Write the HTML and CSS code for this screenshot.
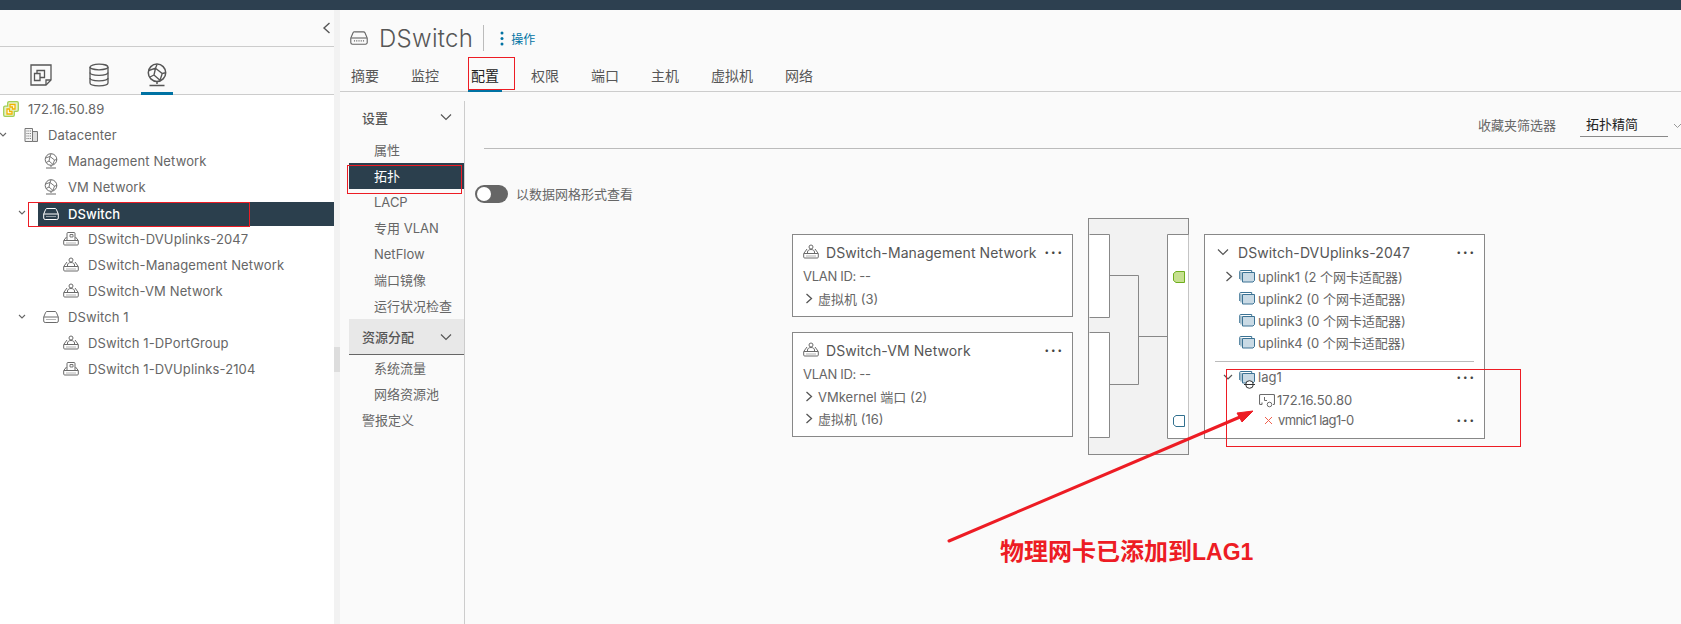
FILE: index.html
```html
<!DOCTYPE html>
<html lang="zh-CN">
<head>
    <meta charset="UTF-8">
    <title>DSwitch - 拓扑</title>
    <link rel="stylesheet" href="styles.css">
</head>
<body>

<svg class="defs" width="0" height="0">
    <symbol id="i-switch" viewBox="0 0 16 16">
        <path d="M4 2.500h8a1.500 1.500 0 0 1 1.300.8L15.300 8v4a1.500 1.500 0 0 1-1.500 1.500H2.200A1.500 1.500 0 0 1 .7 12V8l2-4.700A1.500 1.500 0 0 1 4 2.500z" fill="none" stroke="currentColor"/>
        <path d="M1 8h14" stroke="currentColor"/>
        <path d="M3.500 10.500h9" stroke="currentColor" stroke-dasharray="1 1"/>
    </symbol>
    <symbol id="i-pg" viewBox="0 0 16 16">
        <path d="M4 5 .7 9.500v3.500a1 1 0 0 0 1 1h12.600a1 1 0 0 0 1-1V9.500L12 5" fill="none" stroke="currentColor"/>
        <path d="M1 9.500h14" stroke="currentColor"/>
        <path d="M3.500 12h9" stroke="currentColor" stroke-dasharray="1 1"/>
        <circle cx="8" cy="3" r="2" fill="none" stroke="currentColor"/>
        <path d="M4.500 9.500V8c0-1.500 1.500-2.500 3.500-2.500s3.500 1 3.500 2.500v1.500" fill="none" stroke="currentColor"/>
    </symbol>
    <symbol id="i-upg" viewBox="0 0 16 16">
        <path d="M3.500 6 .7 9.500v3.500a1 1 0 0 0 1 1h12.600a1 1 0 0 0 1-1V9.500L12.500 6" fill="none" stroke="currentColor"/>
        <path d="M4 9V2.500a1 1 0 0 1 1-1h6a1 1 0 0 1 1 1V9" fill="none" stroke="currentColor"/>
        <path d="M1 9.500h14" stroke="currentColor"/>
        <path d="M3.500 12h9" stroke="currentColor" stroke-dasharray="1 1"/>
        <path d="M7 3.500h3v2.500H7z" fill="none" stroke="currentColor" stroke-width=".9"/>
    </symbol>
    <symbol id="i-net" viewBox="0 0 16 16">
        <circle cx="8" cy="6.500" r="5.800" fill="none" stroke="currentColor"/>
        <path d="M2.500 5 7 3.500l1-2.500M7 3.500l4.500 3.500 2.300-.5M11.500 7l-1.500 4.500M3 9.500l3-1.500 4 3.500M6 8 7 3.500" fill="none" stroke="currentColor" stroke-width=".9"/>
        <path d="M8 12.500v1.500M3 15h10" stroke="currentColor"/>
    </symbol>
    <symbol id="i-uplink" viewBox="0 0 16 16">
        <path d="M.7 11V3.500a1 1 0 0 1 1-1h11v2" fill="none" stroke="#3c7394"/>
        <path d="M3.500 4.500h12v8l-1.500 1.500H3.500z" fill="#c9dae5" stroke="#3c7394"/>
        <path d="M2 12.500V3.800" stroke="#3c7394" stroke-width=".8"/>
    </symbol>
</svg>

<div class="page">
    <div class="topbar"></div>

    <div class="main">
        <!-- Inventory tree -->
        <aside class="inventory">
            <div class="collapse-strip">
                <svg class="collapse-icon" width="9" height="12" viewBox="0 0 9 12"><path d="M7.500 1 2 6l5.500 5" fill="none" stroke="#565656" stroke-width="1.400"/></svg>
            </div>
            <div class="inv-tabs">
                <div class="inv-tab">
                    <svg width="24" height="24" viewBox="0 0 24 24" fill="none" stroke="#565656" stroke-width="1.300">
                        <path d="M2 2h20v15l-5 5H2z"/><path d="M22 17h-5v5"/><path d="M8 7.500h7.500v7H8z"/><path d="M5.500 10.500H11v7H5.500z" fill="#fafafa"/>
                    </svg>
                </div>
                <div class="inv-tab">
                    <svg width="22" height="24" viewBox="0 0 22 24" fill="none" stroke="#565656" stroke-width="1.300">
                        <ellipse cx="11" cy="4" rx="9" ry="2.800"/><path d="M2 4v16c0 1.700 4 2.800 9 2.800s9-1.100 9-2.800V4"/><path d="M2 9.500c0 1.700 4 2.800 9 2.800s9-1.100 9-2.800M2 15c0 1.700 4 2.800 9 2.800s9-1.100 9-2.800"/>
                    </svg>
                </div>
                <div class="inv-tab active">
                    <svg width="24" height="24" class="ico-dark"><use href="#i-net"/></svg>
                </div>
            </div>

            <div class="tree">
                <div class="tree-row">
                    <div class="tree-label lvl-root">
                        <svg width="16" height="16" viewBox="0 0 16 16" fill="none"><path d="M6 .7h8a1.300 1.300 0 0 1 1.300 1.300v7a1.300 1.300 0 0 1-1.300 1.300h-2.700V14a1.300 1.300 0 0 1-1.300 1.300H2A1.300 1.300 0 0 1 .7 14V6.500A1.300 1.300 0 0 1 2 5.200h2.700V2A1.300 1.300 0 0 1 6 .7z" fill="#e6f1c9" stroke="#a2cf55" stroke-width="1.300"/><path d="M7 3.500h5v4.500h-2.500V6H7zM4 8h2.500v2.500H9V13H4z" fill="#fff" stroke="#f0b400" stroke-width="1.300"/></svg>
                        <span>172.16.50.89</span>
                    </div>
                </div>
                <div class="tree-row">
                    <span class="twist twist-dc"><svg width="8" height="6" viewBox="0 0 8 6"><path d="M1 1l3 3 3-3" fill="none" stroke="#666" stroke-width="1.100"/></svg></span>
                    <div class="tree-label lvl-dc">
                        <svg width="16" height="16" viewBox="0 0 16 16" fill="none" stroke="#777"><path d="M9.500 4.500h5v10h-5z" fill="#ddd"/><path d="M2 1.500h7.500v13H2z" fill="#f4f4f4"/><path d="M3.500 4h4.500M3.500 6.500h4.500M3.500 9h4.500M3.500 11.500h4.500" stroke-dasharray="1 .8"/></svg>
                        <span>Datacenter</span>
                    </div>
                </div>
                <div class="tree-row">
                    <div class="tree-label lvl-net">
                        <svg width="16" height="16" class="ico"><use href="#i-net"/></svg>
                        <span>Management Network</span>
                    </div>
                </div>
                <div class="tree-row">
                    <div class="tree-label lvl-net">
                        <svg width="16" height="16" class="ico"><use href="#i-net"/></svg>
                        <span>VM Network</span>
                    </div>
                </div>
                <div class="tree-row">
                    <span class="twist twist-sw"><svg width="8" height="6" viewBox="0 0 8 6"><path d="M1 1l3 3 3-3" fill="none" stroke="#666" stroke-width="1.100"/></svg></span>
                    <div class="tree-label lvl-sw selected">
                        <svg width="16" height="16" class="ico-white"><use href="#i-switch"/></svg>
                        <span>DSwitch</span>
                    </div>
                </div>
                <div class="tree-row">
                    <div class="tree-label lvl-pg">
                        <svg width="16" height="16" class="ico"><use href="#i-upg"/></svg>
                        <span>DSwitch-DVUplinks-2047</span>
                    </div>
                </div>
                <div class="tree-row">
                    <div class="tree-label lvl-pg">
                        <svg width="16" height="16" class="ico"><use href="#i-pg"/></svg>
                        <span>DSwitch-Management Network</span>
                    </div>
                </div>
                <div class="tree-row">
                    <div class="tree-label lvl-pg">
                        <svg width="16" height="16" class="ico"><use href="#i-pg"/></svg>
                        <span>DSwitch-VM Network</span>
                    </div>
                </div>
                <div class="tree-row">
                    <span class="twist twist-sw"><svg width="8" height="6" viewBox="0 0 8 6"><path d="M1 1l3 3 3-3" fill="none" stroke="#666" stroke-width="1.100"/></svg></span>
                    <div class="tree-label lvl-sw">
                        <svg width="16" height="16" class="ico"><use href="#i-switch"/></svg>
                        <span>DSwitch 1</span>
                    </div>
                </div>
                <div class="tree-row">
                    <div class="tree-label lvl-pg">
                        <svg width="16" height="16" class="ico"><use href="#i-pg"/></svg>
                        <span>DSwitch 1-DPortGroup</span>
                    </div>
                </div>
                <div class="tree-row">
                    <div class="tree-label lvl-pg">
                        <svg width="16" height="16" class="ico"><use href="#i-upg"/></svg>
                        <span>DSwitch 1-DVUplinks-2104</span>
                    </div>
                </div>
            </div>
        </aside>

        <div class="splitter"><div class="splitter-handle"></div></div>

        <!-- Object view -->
        <section class="content">
            <div class="title-row">
                <svg width="18" height="18" class="ico-title"><use href="#i-switch"/></svg>
                <h1>DSwitch</h1>
                <span class="title-sep"></span>
                <span class="actions">
                    <svg width="4" height="15" viewBox="0 0 4 15" fill="#0072a3"><circle cx="2" cy="2" r="1.500"/><circle cx="2" cy="7.500" r="1.500"/><circle cx="2" cy="13" r="1.500"/></svg>
                    操作
                </span>
            </div>

            <nav class="tabs">
                <a class="tab w60">摘要</a>
                <a class="tab w60">监控</a>
                <a class="tab w60 active">配置</a>
                <a class="tab w60">权限</a>
                <a class="tab w60">端口</a>
                <a class="tab w60">主机</a>
                <a class="tab w74">虚拟机</a>
                <a class="tab">网络</a>
            </nav>

            <div class="config">
                <div class="side-nav">
                    <div class="nav-head first">设置<svg width="12" height="8" viewBox="0 0 12 8"><path d="M1 1.500l5 5 5-5" fill="none" stroke="#565656" stroke-width="1.200"/></svg></div>
                    <a class="nav-item">属性</a>
                    <a class="nav-item current">拓扑</a>
                    <a class="nav-item">LACP</a>
                    <a class="nav-item">专用 VLAN</a>
                    <a class="nav-item">NetFlow</a>
                    <a class="nav-item">端口镜像</a>
                    <a class="nav-item">运行状况检查</a>
                    <div class="nav-head open">资源分配<svg width="12" height="8" viewBox="0 0 12 8"><path d="M1 1.500l5 5 5-5" fill="none" stroke="#565656" stroke-width="1.200"/></svg></div>
                    <a class="nav-item">系统流量</a>
                    <a class="nav-item">网络资源池</a>
                    <a class="nav-item top-level">警报定义</a>
                </div>

                <div class="topology-pane">
                    <div class="filter-bar">
                        <span class="filter-label">收藏夹筛选器</span>
                        <span class="filter-select">拓扑精简</span>
                        <svg class="filter-chev" width="9" height="6" viewBox="0 0 9 6"><path d="M1 1l3.500 3.500L8 1" fill="none" stroke="#999" stroke-width="1"/></svg>
                    </div>

                    <div class="grid-toggle">
                        <span class="toggle"><span class="knob"></span></span>
                        以数据网格形式查看
                    </div>

                    <div class="topology">
                        <div class="pg-column">
                            <div class="card card-mgmt">
                                <div class="card-title">
                                    <svg width="16" height="16" class="ico"><use href="#i-pg"/></svg>
                                    <span class="grow">DSwitch-Management Network</span>
                                    <span class="dots">•••</span>
                                </div>
                                <div class="card-line vlan">VLAN ID: --</div>
                                <div class="card-line"><svg class="caret" width="8" height="11" viewBox="0 0 8 11"><path d="M1.500 1l5 4.500-5 4.500" fill="none" stroke="#565656" stroke-width="1.300"/></svg>虚拟机 (3)</div>
                            </div>
                            <div class="card card-vm">
                                <div class="card-title">
                                    <svg width="16" height="16" class="ico"><use href="#i-pg"/></svg>
                                    <span class="grow">DSwitch-VM Network</span>
                                    <span class="dots">•••</span>
                                </div>
                                <div class="card-line vlan">VLAN ID: --</div>
                                <div class="card-line"><svg class="caret" width="8" height="11" viewBox="0 0 8 11"><path d="M1.500 1l5 4.500-5 4.500" fill="none" stroke="#565656" stroke-width="1.300"/></svg>VMkernel 端口 (2)</div>
                                <div class="card-line"><svg class="caret" width="8" height="11" viewBox="0 0 8 11"><path d="M1.500 1l5 4.500-5 4.500" fill="none" stroke="#565656" stroke-width="1.300"/></svg>虚拟机 (16)</div>
                            </div>
                        </div>

                        <div class="switch-box">
                            <svg class="switch-wires" width="101" height="237" viewBox="0 0 101 237" fill="none">
                                <path d="M1.500 16.500H21.500V99.500H1.500M1.500 114.500H21.500V219.500H1.500" fill="#fff" stroke="#888"/>
                                <path d="M21.500 57.500H50.500V166.500H21.500M50.500 118.500H79.500" stroke="#888"/>
                                <path d="M100.500 16.500H79.500V220.500H100.500" fill="#fff" stroke="#888"/>
                                <path d="M88 53.500h8.500v11H88l-2.500-2v-7z" fill="#c6e08f" stroke="#6fae1e"/>
                                <path d="M88 197.500h8.500v11H88l-2.500-2v-7z" fill="#fff" stroke="#31708f"/>
                            </svg>
                        </div>

                        <div class="card card-uplinks">
                            <div class="card-title up-title">
                                <svg class="chev" width="12" height="8" viewBox="0 0 12 8"><path d="M1 1.500l5 5 5-5" fill="none" stroke="#565656" stroke-width="1.200"/></svg>
                                <span class="grow">DSwitch-DVUplinks-2047</span>
                                <span class="dots">•••</span>
                            </div>
                            <div class="uplink-row"><svg class="caret" width="8" height="11" viewBox="0 0 8 11"><path d="M1.500 1l5 4.500-5 4.500" fill="none" stroke="#565656" stroke-width="1.300"/></svg><svg width="16" height="16"><use href="#i-uplink"/></svg>uplink1 (2 个网卡适配器)</div>
                            <div class="uplink-row no-caret"><svg width="16" height="16"><use href="#i-uplink"/></svg>uplink2 (0 个网卡适配器)</div>
                            <div class="uplink-row no-caret"><svg width="16" height="16"><use href="#i-uplink"/></svg>uplink3 (0 个网卡适配器)</div>
                            <div class="uplink-row no-caret"><svg width="16" height="16"><use href="#i-uplink"/></svg>uplink4 (0 个网卡适配器)</div>
                            <div class="uplink-sep"></div>
                            <div class="lag-row">
                                <svg class="chev" width="10" height="7" viewBox="0 0 10 7"><path d="M1 1l4 4 4-4" fill="none" stroke="#565656" stroke-width="1.200"/></svg>
                                <span class="lag-icon">
                                    <svg width="16" height="16"><use href="#i-uplink"/></svg>
                                    <svg class="lag-badge" width="11" height="9" viewBox="0 0 11 9" fill="#fff" stroke="#333"><circle cx="5.500" cy="4.500" r="3.800"/><path d="M0 4.500h11"/></svg>
                                </span>
                                <span class="grow">lag1</span>
                                <span class="dots">•••</span>
                            </div>
                            <div class="host-row">
                                <svg width="16" height="16" viewBox="0 0 16 16" fill="none" stroke="#6b6b6b"><path d="M3 12.500H1.500a1 1 0 0 1-1-1v-8a1 1 0 0 1 1-1h13a1 1 0 0 1 1 1v8a1 1 0 0 1-1 1H14M3 12.500v-2" stroke-width="1.100"/><path d="M5.500 5v3.500h2.500"/><circle cx="10.500" cy="12.500" r="2.300" fill="#fff"/></svg>
                                172.16.50.80
                            </div>
                            <div class="nic-row">
                                <svg width="9" height="9" viewBox="0 0 9 9"><path d="M1 1l7 7M8 1l-7 7" stroke="#f0604d" stroke-width="1"/></svg>
                                <span class="grow nic-name">vmnic1 lag1-0</span>
                                <span class="dots">•••</span>
                            </div>
                        </div>
                    </div>
                </div>
            </div>
        </section>
    </div>

    <!-- Screenshot annotations -->
    <div class="mark mark-tree"></div>
    <div class="mark mark-tab"></div>
    <div class="mark mark-nav"></div>
    <div class="mark mark-lag"></div>
    <svg class="arrow" width="320" height="140" viewBox="0 0 320 140">
        <path d="M5 135 L296 11" stroke="#ed1c24" stroke-width="3" stroke-linecap="round"/>
        <path d="M309 5 L293 7 L298 16z" fill="#ed1c24" stroke="#ed1c24"/>
    </svg>
    <div class="note">物理网卡已添加到<span class="note-latin">LAG1</span></div>
</div>

</body>
</html>
```

FILE: styles.css
```css
* {
    box-sizing: border-box;
}
html, body {
    margin: 0;
    padding: 0;
    height: 100%;
    overflow: hidden;
}
body {
    font-family: Inter, "Noto Sans CJK SC", sans-serif;
    font-size: 13px;
    color: #666;
    background-color: #fafafa;
}
svg {
    flex-shrink: 0;
}
.defs {
    position: absolute;
}
.page {
    position: relative;
    width: 1681px;
    height: 624px;
    overflow: hidden;
}
.topbar {
    height: 10px;
    background-color: #2d4050;
}
.main {
    display: flex;
    height: 614px;
}

/* inventory */
.inventory {
    width: 334px;
    flex-shrink: 0;
    background-color: #fff;
}
.collapse-strip {
    display: flex;
    justify-content: flex-end;
    align-items: center;
    height: 37px;
    padding: 0 3px 0 0;
    background-color: #fafafa;
    border-bottom: 1px solid #ccc;
}
.inv-tabs {
    display: flex;
    gap: 26px;
    height: 48px;
    padding-left: 25px;
    background-color: #fafafa;
    border-bottom: 1px solid #ccc;
}
.inv-tab {
    display: flex;
    justify-content: center;
    align-items: flex-start;
    width: 32px;
    padding-top: 16px;
}
.inv-tab.active {
    border-bottom: 3px solid #0072a3;
    height: 48px;
}
.ico-dark {
    color: #565656;
}
.tree {
    padding-top: 1px;
}
.tree-row {
    display: flex;
    align-items: center;
    height: 26px;
}
.twist {
    display: flex;
    justify-content: center;
    width: 24px;
    flex-shrink: 0;
}
.twist-dc {
    margin-left: -9px;
}
.twist-sw {
    margin: 0 4px 0 10px;
}
.tree-label {
    display: flex;
    flex: 1;
    align-items: center;
    gap: 9px;
    height: 26px;
    white-space: nowrap;
    letter-spacing: .12px;
}
.lvl-root {
    padding-left: 3px;
}
.lvl-dc {
    padding-left: 8px;
}
.lvl-net {
    padding-left: 43px;
}
.lvl-sw {
    padding-left: 5px;
}
.lvl-pg {
    padding-left: 63px;
}
.ico {
    color: #6b6b6b;
}
.ico-white {
    color: #fff;
}
.selected {
    align-self: flex-end;
    height: 24px;
    background-color: #2b3f4d;
    color: #fff;
    font-weight: 500;
}
.splitter {
    width: 6px;
    flex-shrink: 0;
    background-color: #f2f2f2;
    padding-top: 337px;
}
.splitter-handle {
    height: 25px;
    background-color: #ddd;
}

/* object view */
.content {
    flex: 1;
    min-width: 0;
}
.title-row {
    display: flex;
    align-items: center;
    height: 50px;
    padding: 6px 0 0 10px;
}
.ico-title {
    color: #666;
    margin-right: 11px;
}
h1 {
    margin: 0;
    font-size: 24px;
    font-weight: 300;
    color: #565656;
    letter-spacing: .3px;
}
.title-sep {
    width: 1px;
    height: 26px;
    margin: 0 16px 0 10px;
    background-color: #bbb;
}
.actions {
    display: flex;
    align-items: center;
    gap: 7px;
    font-size: 12px;
    color: #0072a3;
}
.tabs {
    display: flex;
    height: 32px;
    padding-left: 11px;
    border-bottom: 1px solid #ccc;
}
.tab {
    font-size: 14px;
    line-height: 31px;
    color: #565656;
    white-space: nowrap;
}
.w60 {
    width: 60px;
}
.w74 {
    width: 74px;
}
.tab.active {
    width: 34px;
    margin: 0 29px 0 -3px;
    padding-left: 3px;
    height: 32px;
    color: #222;
    border-bottom: 3px solid #0072a3;
}
.config {
    display: flex;
    height: 532px;
}

/* settings list */
.side-nav {
    width: 125px;
    flex-shrink: 0;
    margin-top: 9px;
    padding-left: 10px;
    border-right: 1px solid #ccc;
}
.nav-head {
    display: flex;
    justify-content: space-between;
    align-items: center;
    height: 36px;
    padding: 0 12px;
    font-weight: 500;
    color: #565656;
}
.nav-head.first {
    padding-bottom: 4px;
}
.nav-head.open {
    margin-left: -1px;
    padding-left: 13px;
    background-color: #e8e8e8;
    border-bottom: 1px solid #666;
}
.nav-item {
    display: block;
    height: 26px;
    padding-left: 24px;
    line-height: 26px;
    white-space: nowrap;
}
.nav-item.current {
    margin-left: -1px;
    padding-left: 25px;
    background-color: #2b3f4d;
    color: #fff;
}
.nav-item.top-level {
    padding-left: 12px;
}

/* topology */
.topology-pane {
    flex: 1;
    min-width: 0;
}
.filter-bar {
    display: flex;
    justify-content: flex-end;
    align-items: flex-end;
    height: 57px;
    margin-left: 19px;
    padding-bottom: 11px;
    border-bottom: 1px solid #bbb;
}
.filter-label {
    height: 24px;
    line-height: 24px;
    margin-right: 24px;
}
.filter-select {
    width: 88px;
    height: 24px;
    padding-left: 6px;
    margin-right: 5px;
    line-height: 23px;
    color: #222;
    border-bottom: 1px solid #888;
}
.filter-chev {
    margin-right: -1px;
    margin-bottom: 8px;
}
.grid-toggle {
    display: flex;
    align-items: center;
    gap: 8px;
    margin: 35px 0 0 10px;
}
.toggle {
    display: block;
    width: 33px;
    height: 18px;
    padding: 2px;
    border-radius: 9px;
    background-color: #666;
}
.knob {
    display: block;
    width: 14px;
    height: 14px;
    border-radius: 50%;
    background-color: #fff;
}
.topology {
    display: flex;
    align-items: flex-start;
    margin: 15px 0 0 327px;
}
.pg-column {
    display: flex;
    flex-direction: column;
    gap: 15px;
    width: 281px;
    margin-top: 16px;
    margin-right: 15px;
}
.card {
    background-color: #fff;
    border: 1px solid #888;
}
.card-mgmt {
    height: 83px;
    padding: 7px 10px;
}
.card-vm {
    height: 105px;
    padding: 7px 10px;
}
.card-title {
    display: flex;
    align-items: center;
    gap: 7px;
    height: 20px;
    font-size: 14px;
    color: #565656;
    letter-spacing: .1px;
    white-space: nowrap;
}
.grow {
    flex: 1;
}
.dots {
    font-size: 8px;
    letter-spacing: 2px;
    margin-right: -2px;
    color: #444;
}
.card-line {
    display: flex;
    align-items: center;
    height: 22px;
    white-space: nowrap;
}
.card-title + .card-line {
    margin-top: 3px;
}
.vlan {
    letter-spacing: -.3px;
}
.card-line .caret {
    margin: 0 5px 0 2px;
}
.switch-box {
    position: relative;
    width: 101px;
    height: 237px;
    background-color: #f2f2f2;
    border: 1px solid #888;
    margin-right: 15px;
}
.switch-wires {
    position: absolute;
    top: -1px;
    left: -1px;
}
.card-uplinks {
    width: 281px;
    height: 205px;
    margin-top: 16px;
    padding: 7px 10px;
}
.up-title {
    gap: 9px;
    padding-left: 2px;
}
.uplink-row {
    display: flex;
    align-items: center;
    gap: 3px;
    height: 22px;
    padding-left: 10px;
    white-space: nowrap;
}
.uplink-row .caret {
    margin-right: 3px;
}
.uplink-row.no-caret {
    padding-left: 24px;
}
.up-title + .uplink-row {
    margin-top: 3px;
}
.uplink-sep {
    height: 1px;
    margin: 8px 0 5px;
    background-color: #bbb;
}
.lag-row {
    display: flex;
    align-items: center;
    height: 20px;
    padding-left: 8px;
    white-space: nowrap;
}
.lag-row .chev {
    margin-right: 6px;
}
.lag-icon {
    position: relative;
    display: block;
    width: 16px;
    height: 16px;
    margin-right: 3px;
}
.lag-badge {
    position: absolute;
    left: 5px;
    top: 11px;
}
.host-row {
    display: flex;
    align-items: center;
    gap: 2px;
    height: 20px;
    margin-top: 3px;
    padding-left: 44px;
}
.nic-row {
    display: flex;
    align-items: center;
    gap: 5px;
    height: 20px;
    padding-left: 49px;
    white-space: nowrap;
}
.nic-name {
    letter-spacing: -.6px;
}

/* red annotations */
.mark {
    position: absolute;
    border: 1px solid #ed1c24;
}
.mark-tree {
    left: 28px;
    top: 202px;
    width: 222px;
    height: 25px;
}
.mark-tab {
    left: 468px;
    top: 57px;
    width: 47px;
    height: 33px;
}
.mark-nav {
    left: 347px;
    top: 165px;
    width: 115px;
    height: 29px;
}
.mark-lag {
    left: 1226px;
    top: 369px;
    width: 295px;
    height: 78px;
}
.arrow {
    position: absolute;
    left: 944px;
    top: 406px;
}
.note {
    position: absolute;
    left: 1000px;
    top: 534px;
    font-family: "Liberation Sans", "Noto Sans CJK SC", sans-serif;
    font-size: 24px;
    line-height: 36px;
    font-weight: 700;
    color: #ed1c24;
    white-space: nowrap;
}
.note-latin {
    font-size: 23px;
}
```
